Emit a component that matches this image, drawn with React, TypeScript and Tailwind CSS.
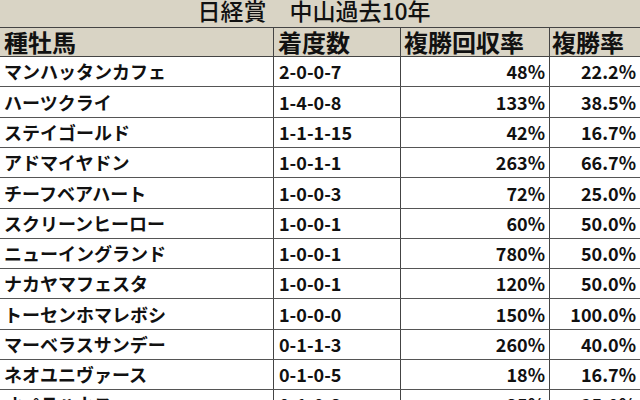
import React from "react";

const rows: { name: string; rec: string; roi: string; rate: string; h: string }[] = [
  { name: "マンハッタンカフェ", rec: "2-0-0-7", roi: "48%", rate: "22.2%", h: "h-[30px]" },
  { name: "ハーツクライ", rec: "1-4-0-8", roi: "133%", rate: "38.5%", h: "h-[31px]" },
  { name: "ステイゴールド", rec: "1-1-1-15", roi: "42%", rate: "16.7%", h: "h-[30px]" },
  { name: "アドマイヤドン", rec: "1-0-1-1", roi: "263%", rate: "66.7%", h: "h-[30px]" },
  { name: "チーフベアハート", rec: "1-0-0-3", roi: "72%", rate: "25.0%", h: "h-[31px]" },
  { name: "スクリーンヒーロー", rec: "1-0-0-1", roi: "60%", rate: "50.0%", h: "h-[30px]" },
  { name: "ニューイングランド", rec: "1-0-0-1", roi: "780%", rate: "50.0%", h: "h-[30px]" },
  { name: "ナカヤマフェスタ", rec: "1-0-0-1", roi: "120%", rate: "50.0%", h: "h-[30px]" },
  { name: "トーセンホマレボシ", rec: "1-0-0-0", roi: "150%", rate: "100.0%", h: "h-[31px]" },
  { name: "マーベラスサンデー", rec: "0-1-1-3", roi: "260%", rate: "40.0%", h: "h-[30px]" },
  { name: "ネオユニヴァース", rec: "0-1-0-5", roi: "18%", rate: "16.7%", h: "h-[30px]" },
  { name: "オペラハウス", rec: "0-1-0-3", roi: "35%", rate: "25.0%", h: "h-[30px]" },
];

const font = { fontFamily: '"Noto Sans CJK JP", "Noto Sans", sans-serif' };

export default function App() {
  return (
    <div className="w-[640px] h-[400px] overflow-hidden bg-white text-[#111]" style={font}>
      <div className="h-[28px] bg-[#d9d4c5] border-b border-[#444] flex items-start justify-center pr-[12px]">
        <div className="text-[23px] leading-[21px] font-medium whitespace-pre">日経賞　中山過去10年</div>
      </div>
      <div className="grid grid-cols-[273px_127px_149px_91px] h-[29px] bg-[#d9d4c5] border-b border-[#444] text-[24px] leading-[28px] font-bold">
        <div className="pl-[4px] whitespace-nowrap">種牡馬</div>
        <div className="pl-[4px] border-l border-[#444] whitespace-nowrap">着度数</div>
        <div className="pl-[3px] border-l border-[#444] whitespace-nowrap">複勝回収率</div>
        <div className="pl-[2px] border-l border-[#444] whitespace-nowrap">複勝率</div>
      </div>
      {rows.map((r, i) => (
        <div
          key={i}
          className={`grid grid-cols-[273px_127px_149px_91px] ${r.h} border-b border-[#555] text-[18px] font-bold items-center`}
        >
          <div className="pl-[4px] h-full flex items-center whitespace-nowrap overflow-hidden">{r.name}</div>
          <div className="pl-[5px] h-full flex items-center border-l border-[#444] whitespace-nowrap">{r.rec}</div>
          <div className="pr-[4px] h-full flex items-center justify-end border-l border-[#444] whitespace-nowrap">{r.roi}</div>
          <div className="pr-[4px] h-full flex items-center justify-end border-l border-[#444] whitespace-nowrap">{r.rate}</div>
        </div>
      ))}
    </div>
  );
}
